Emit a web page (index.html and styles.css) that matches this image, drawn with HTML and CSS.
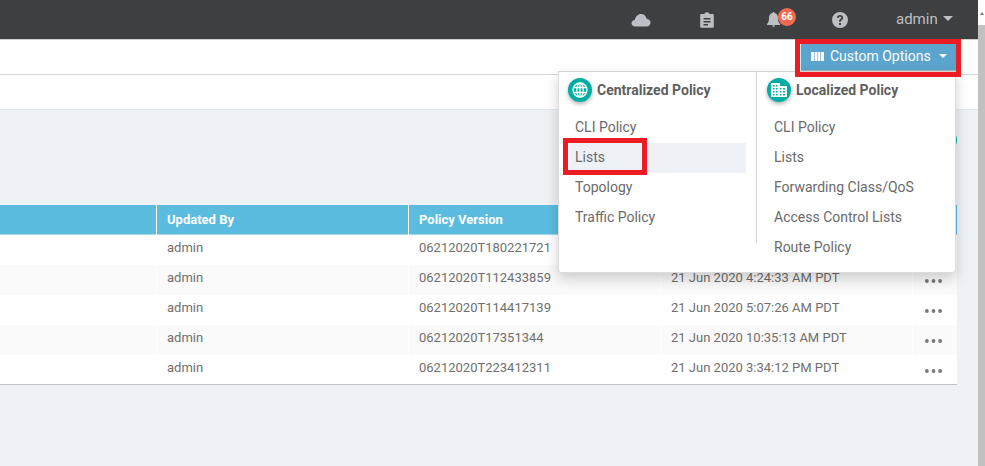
FILE: index.html
```html
<!DOCTYPE html>
<html lang="en">
<head>
  <meta charset="UTF-8" />
  <title>Policies</title>
  <link rel="stylesheet" href="styles.css">
</head>
<body>

<div class="page">
  <header class="topbar">
    <svg class="top-icon cloud" width="20" height="14" viewBox="0 0 20 14"><path d="M4.500 13.500C2 13.500.5 12 .5 10.200.5 8.300 2 7 3.800 6.900 4.500 3.500 7 1 10 1c2.800 0 5 2 5.600 4.800 2.300.2 3.900 2 3.900 4 0 2-1.600 3.700-3.900 3.700z"/></svg>
    <svg class="top-icon clip" width="14" height="16" viewBox="0 0 14 16"><path fill-rule="evenodd" d="M1.500 2H4.500C4.500 1 5.500.2 7 .2S9.500 1 9.500 2h3c.8 0 1.300.5 1.300 1.300v11.200c0 .8-.5 1.300-1.300 1.300h-11C.7 15.800.2 15.300.2 14.500V3.300C.2 2.500.7 2 1.500 2zM3.500 6v1.500h7V6zM3.500 9v1.500h7V9zM3.500 12v1.400h4.500V12z"/></svg>
    <span class="bell-wrap">
      <svg class="top-icon" width="13" height="15" viewBox="0 0 13 15"><path d="M6.500 0c.7 0 1 .5 1 1.100C9.700 1.600 11 3.400 11 5.800c0 3 .5 4.700 2 6.200v1H0v-1c1.500-1.500 2-3.200 2-6.200 0-2.400 1.300-4.200 3.500-4.700C5.500.5 5.800 0 6.500 0zM5 13.600h3C8 14.500 7.300 15 6.500 15S5 14.500 5 13.600z"/></svg>
      <span class="badge">66</span>
    </span>
    <svg class="top-icon help" width="16" height="16" viewBox="0 0 16 16"><path fill-rule="evenodd" d="M8 0a8 8 0 1 1 0 16A8 8 0 0 1 8 0zM7 11v2h2v-2zM8 3C6.200 3 5 4 4.800 5.700l1.900.3C6.800 5.200 7.200 4.800 8 4.800c.7 0 1.200.4 1.200 1 0 .5-.3.800-1 1.300C7.300 7.700 7 8.300 7 9.800h2c0-.9.200-1.200.9-1.700.9-.6 1.300-1.300 1.300-2.300C11.200 4.100 9.900 3 8 3z"/></svg>
    <span class="user">admin<span class="caret"></span></span>
  </header>

  <div class="bar">
    <button class="options-btn" type="button">
      <svg width="13" height="9" viewBox="0 0 13 9"><path d="M0 0h3v9H0zM3.600 0h2.600v9H3.600zM6.800 0h2.600v9H6.800zM10 0h3v9h-3z"/></svg>
      Custom Options
      <span class="caret"></span>
    </button>
  </div>
  <div class="bar second"></div>

  <main class="content">
    <span class="round-btn"></span>
    <div class="policies">
      <div class="row head">
        <div class="cell"></div>
        <div class="cell">Updated By</div>
        <div class="cell">Policy Version</div>
        <div class="cell"></div>
        <div class="cell"></div>
      </div>
      <div class="row">
        <div class="cell"></div>
        <div class="cell">admin</div>
        <div class="cell">06212020T180221721</div>
        <div class="cell"></div>
        <div class="cell more"></div>
      </div>
      <div class="row">
        <div class="cell"></div>
        <div class="cell">admin</div>
        <div class="cell">06212020T112433859</div>
        <div class="cell">21 Jun 2020 4:24:33 AM PDT</div>
        <div class="cell more"><svg width="17" height="4" viewBox="0 0 18 4"><circle cx="2" cy="2" r="2"/><circle cx="9" cy="2" r="2"/><circle cx="16" cy="2" r="2"/></svg></div>
      </div>
      <div class="row">
        <div class="cell"></div>
        <div class="cell">admin</div>
        <div class="cell">06212020T114417139</div>
        <div class="cell">21 Jun 2020 5:07:26 AM PDT</div>
        <div class="cell more"><svg width="17" height="4" viewBox="0 0 18 4"><circle cx="2" cy="2" r="2"/><circle cx="9" cy="2" r="2"/><circle cx="16" cy="2" r="2"/></svg></div>
      </div>
      <div class="row">
        <div class="cell"></div>
        <div class="cell">admin</div>
        <div class="cell">06212020T17351344</div>
        <div class="cell">21 Jun 2020 10:35:13 AM PDT</div>
        <div class="cell more"><svg width="17" height="4" viewBox="0 0 18 4"><circle cx="2" cy="2" r="2"/><circle cx="9" cy="2" r="2"/><circle cx="16" cy="2" r="2"/></svg></div>
      </div>
      <div class="row">
        <div class="cell"></div>
        <div class="cell">admin</div>
        <div class="cell">06212020T223412311</div>
        <div class="cell">21 Jun 2020 3:34:12 PM PDT</div>
        <div class="cell more"><svg width="17" height="4" viewBox="0 0 18 4"><circle cx="2" cy="2" r="2"/><circle cx="9" cy="2" r="2"/><circle cx="16" cy="2" r="2"/></svg></div>
      </div>
    </div>
  </main>

  <!-- menu abierto sobre la tabla -->
  <div class="menu">
    <section class="menu-col">
      <h2 class="menu-title">
        <span class="menu-icon">
          <svg width="16" height="16" viewBox="0 0 16 16" fill="none" stroke="#fff" stroke-width="1.300"><circle cx="8" cy="8" r="7"/><ellipse cx="8" cy="8" rx="3.200" ry="7"/><path d="M8 1v14M1.500 5.500h13M1.500 10.500h13"/></svg>
        </span>
        Centralized Policy
      </h2>
      <a class="menu-item">CLI Policy</a>
      <a class="menu-item active">Lists</a>
      <a class="menu-item">Topology</a>
      <a class="menu-item">Traffic Policy</a>
    </section>
    <section class="menu-col">
      <h2 class="menu-title">
        <span class="menu-icon">
          <svg width="16" height="14" viewBox="0 0 16 14"><path fill="#fff" fill-rule="evenodd" d="M0 0h9v3h7v11H0zM2 2v1.500h1.500V2zM5 2v1.500h1.500V2zM2 5v1.500h1.500V5zM5 5v1.500h1.500V5zM9 5v1.500h1.500V5zM12 5v1.500h2V5zM2 8v1.500h1.500V8zM5 8v1.500h1.500V8zM9 8v1.500h1.500V8zM12 8v1.500h2V8zM2 11v1.500h1.500V11zM5 11v1.500h1.500V11zM9 11v1.500h1.500V11zM12 11v1.500h2V11z"/></svg>
        </span>
        Localized Policy
      </h2>
      <a class="menu-item">CLI Policy</a>
      <a class="menu-item">Lists</a>
      <a class="menu-item">Forwarding Class/QoS</a>
      <a class="menu-item">Access Control Lists</a>
      <a class="menu-item">Route Policy</a>
    </section>
  </div>

  <!-- marcas rojas de la captura -->
  <span class="mark mark-options"></span>
  <span class="mark mark-lists"></span>
</div>

<div class="scrollbar"><span class="scroll-arrow"></span></div>

</body>
</html>
```

FILE: styles.css
```css
html, body {
  height: 100%;
}
body {
  margin: 0;
  display: flex;
  overflow: hidden;
  font-family: 'Roboto', sans-serif;
  font-size: 13px;
  color: #6f6f6f;
  background: #fff;
}
.page {
  flex: 1;
  display: flex;
  flex-direction: column;
  position: relative;
  min-width: 0;
}
.scrollbar {
  width: 7px;
  background: linear-gradient(#fff 0, #fff 25px, #c1c1c1 25px);
  display: flex;
  justify-content: center;
  padding-top: 12px;
  box-sizing: border-box;
}
.scroll-arrow {
  width: 0;
  height: 0;
  border: 2px solid transparent;
  border-top: 0;
  border-bottom: 3px solid #777;
}

/* barra superior */
.topbar {
  height: 39px;
  flex: none;
  background: #3e3f41;
  border-bottom: 1px solid #d0d0d0;
  display: flex;
  align-items: center;
  padding-left: 631px;
  color: #bcbfc4;
}
.top-icon {
  fill: #bcbfc4;
  flex: none;
}
.clip {
  margin-left: 49px;
}
.bell-wrap {
  position: relative;
  display: flex;
  margin-left: 53px;
}
.badge {
  position: absolute;
  left: 11px;
  top: -4px;
  width: 18px;
  height: 18px;
  border-radius: 50%;
  background: #f4694f;
  color: #fff;
  font-size: 10px;
  font-weight: 700;
  line-height: 18px;
  text-align: center;
}
.help {
  margin-left: 52px;
}
.user {
  margin-left: 48px;
  font-size: 15px;
  display: flex;
  align-items: center;
  margin-top: -2px;
}
.caret {
  display: inline-block;
  width: 0;
  height: 0;
  border: 5px solid transparent;
  border-bottom: 0;
  border-top: 5px solid currentColor;
}
.user .caret {
  margin-left: 5px;
}

.bar {
  flex: none;
  background: #fff;
  border-bottom: 1px solid #d5d5d5;
  display: flex;
  justify-content: flex-end;
  padding: 4px 21px 0 0;
  height: 30px;
}
.bar.second {
  padding: 0;
  height: 34px;
  border-bottom-color: #e6e8ec;
}
.options-btn {
  width: 156px;
  height: 28px;
  padding: 0 0 2px 10px;
  border: 0;
  border-bottom: 2px solid #a9b4bb;
  background: #5aa4cd;
  color: #fff;
  font: 14px 'Roboto', sans-serif;
  display: flex;
  align-items: center;
}
.options-btn svg {
  fill: #fff;
  margin-right: 6px;
}
.options-btn .caret {
  margin-left: 8px;
  border-width: 4.500px;
  border-bottom: 0;
}

/* tabla */
.content {
  flex: 1;
  background: #eef1f6;
  padding: 95px 21px 0 0;
  position: relative;
}
.round-btn {
  position: absolute;
  right: 21px;
  top: 18px;
  width: 24px;
  height: 24px;
  border-radius: 50%;
  background: #00a99d;
}
.policies {
  background: #fff;
  border-bottom: 1px solid #bfc3c7;
}
.row {
  display: grid;
  grid-template-columns: 157px 252px 252px 252px 44px;
  height: 30px;
}
.row:nth-child(odd) {
  background: #fafafa;
}
.row:last-child {
  height: 29px;
}
.row.head {
  background: #5bbcdf;
  color: #fff;
  font-weight: 700;
  box-shadow: inset 0 -1px 0 #a8d6e8;
}
.cell {
  padding-left: 10px;
  border-right: 1px solid #fff;
  line-height: 26px;
  white-space: nowrap;
  overflow: hidden;
}
.head .cell {
  line-height: 30px;
}
.cell:last-child {
  border-right: 0;
}
.more {
  display: flex;
  justify-content: center;
  padding: 14px 3px 0 0;
  box-sizing: border-box;
}
.more svg {
  fill: #77787a;
}

/* menu */
.menu {
  position: absolute;
  left: 558px;
  top: 71px;
  width: 398px;
  height: 202px;
  box-sizing: border-box;
  background: #fff;
  border: 1px solid #dcdcdc;
  border-top-color: #d5d5d5;
  border-radius: 0 0 3px 3px;
  box-shadow: 0 6px 14px rgba(0,0,0,.18);
  display: grid;
  grid-template-columns: 198px 198px;
  font-size: 14px;
}
.menu-col {
  padding: 5px 0 0 10px;
  height: 171px;
}
.menu-col:first-child {
  border-right: 1px solid #d5d5d5;
  box-sizing: border-box;
  padding: 5px 10px 0 9px;
}
.menu-title {
  margin: 0 0 10px;
  height: 26px;
  display: flex;
  align-items: center;
  gap: 5px;
  font-size: 14px;
  font-weight: 700;
  color: #5f5f5f;
}
.menu-icon {
  width: 24px;
  height: 24px;
  border-radius: 50%;
  background: #00ada2;
  box-shadow: 0 2px 4px rgba(0,0,0,.3);
  display: flex;
  align-items: center;
  justify-content: center;
}
.menu-item {
  display: block;
  height: 30px;
  line-height: 28px;
  padding-left: 6px;
  margin-left: 1px;
  color: #6a6a6a;
}
.menu-item.active {
  background: #eef1f6;
}

/* marcas */
.mark {
  position: absolute;
  box-sizing: border-box;
  border: 5px solid #ed1c24;
}
.mark-options {
  left: 795px;
  top: 39px;
  width: 166px;
  height: 38px;
}
.mark-lists {
  left: 563px;
  top: 138px;
  width: 84px;
  height: 37px;
}
```
